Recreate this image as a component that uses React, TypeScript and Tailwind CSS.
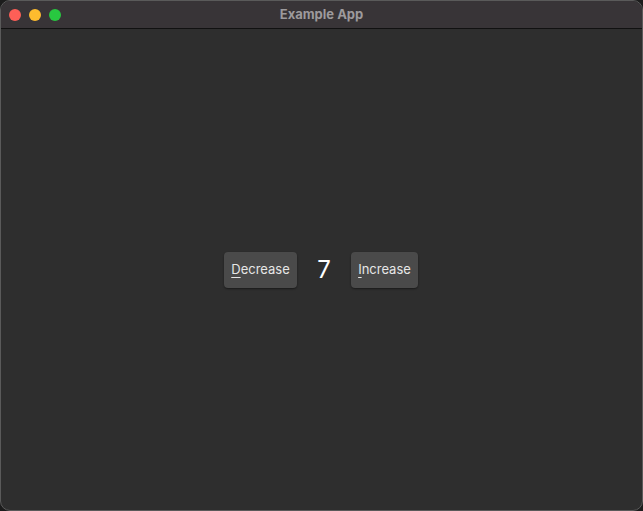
export default function App() {
  return (
    <div className="h-[511px] w-[643px] bg-[#1c1c1c] font-['Inter','Liberation_Sans',sans-serif]">
      <div className="flex h-full w-full flex-col overflow-hidden rounded-[10px] border border-[#5a5a5a] bg-[#2e2e2e]">
        {/* Title bar */}
        <div className="relative flex h-[28px] shrink-0 items-center border-b border-[#111] bg-[#383437]">
          <div className="flex items-center gap-[8px] pl-[8px]">
            <span className="h-[12px] w-[12px] rounded-full bg-[#fe5f57]" />
            <span className="h-[12px] w-[12px] rounded-full bg-[#febc2e]" />
            <span className="h-[12px] w-[12px] rounded-full bg-[#28c840]" />
          </div>
          <div className="absolute inset-0 flex items-center justify-center text-[13px] font-bold text-[#9d9a9c]">
            Example App
          </div>
        </div>

        {/* Content */}
        <div className="flex flex-1 items-center justify-center gap-[20px] pr-[1px]">
          <button
            type="button"
            className="h-[36px] w-[73px] rounded-[4px] bg-[#4a4a4a] text-[13px] text-[#e6e6e6] shadow-[0_1px_2px_rgba(0,0,0,0.45)]"
          >
            <span className="underline decoration-1 underline-offset-[3px]">D</span>ecrease
          </button>
          <span className="w-[14px] text-center text-[24px] leading-none text-white">7</span>
          <button
            type="button"
            className="h-[36px] w-[67px] rounded-[4px] bg-[#4a4a4a] text-[13px] text-[#e6e6e6] shadow-[0_1px_2px_rgba(0,0,0,0.45)]"
          >
            <span className="underline decoration-1 underline-offset-[3px]">I</span>ncrease
          </button>
        </div>
      </div>
    </div>
  );
}
